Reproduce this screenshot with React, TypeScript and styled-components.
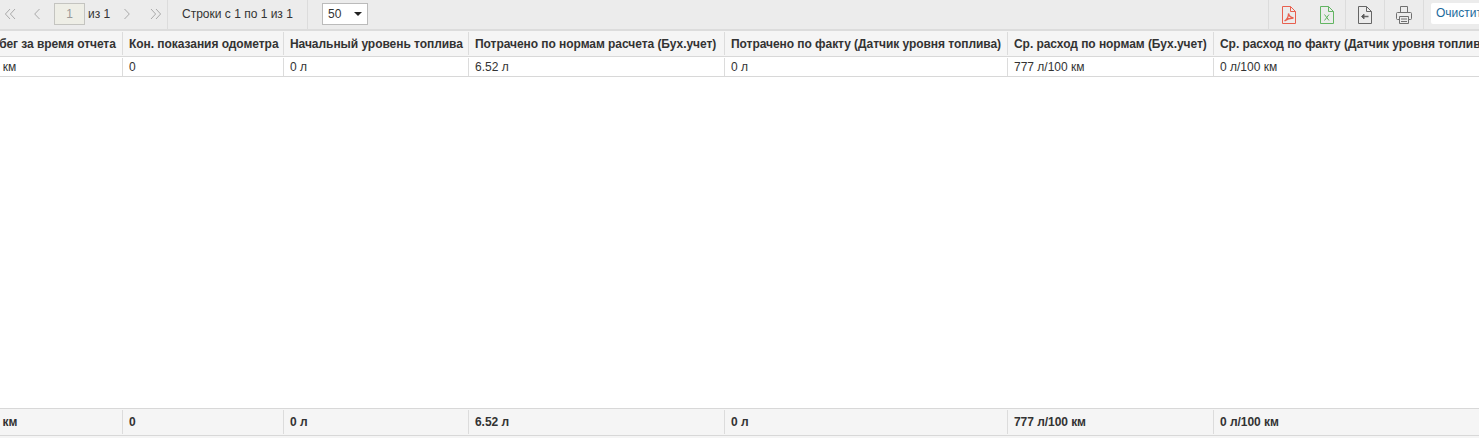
import styled, { createGlobalStyle } from "styled-components";

const GlobalStyle = createGlobalStyle`
  html, body {
    margin: 0;
    height: 100%;
    background: #fff;
    overflow: hidden;
  }
  body {
    font-family: "Liberation Sans", Arial, sans-serif;
    font-size: 12px;
    color: #333;
  }
`;

const Page = styled.div`
  width: 1479px;
  height: 438px;
  display: flex;
  flex-direction: column;
  overflow: hidden;
`;

const Toolbar = styled.div`
  flex: 0 0 31px;
  box-sizing: border-box;
  height: 31px;
  display: flex;
  align-items: stretch;
  background: #ececec;
  border-bottom: 2px solid #dcdcdc;
`;

const Pager = styled.div`
  display: flex;
  align-items: center;
  width: 168px;
  box-sizing: border-box;
  border-right: 1px solid #dcdcdc;
  padding: 0 0 1px 4px;
`;

const Arrow = styled.svg<{ $gap: number }>`
  width: 12px;
  height: 12px;
  margin-right: ${(p) => p.$gap}px;
  fill: none;
  stroke: #aaa;
  stroke-width: 1;
  flex: none;
`;

const PageInput = styled.div`
  width: 31px;
  height: 22px;
  box-sizing: border-box;
  border: 1px solid #c4c4c0;
  background: #eeeee6;
  color: #999;
  text-align: center;
  line-height: 20px;
  margin-right: 3px;
`;

const PageOf = styled.span`
  margin-right: 11px;
  white-space: nowrap;
`;

const RowsInfo = styled.div`
  width: 140px;
  box-sizing: border-box;
  border-right: 1px solid #dcdcdc;
  padding-left: 14px;
  line-height: 28px;
  white-space: nowrap;
`;

const PageSize = styled.div`
  margin: 3px 0 0 14px;
  width: 46px;
  height: 22px;
  box-sizing: border-box;
  border: 1px solid #bbb;
  background: #fff;
  display: flex;
  align-items: center;
  justify-content: space-between;
  padding: 0 5px;

  &::after {
    content: "";
    border-left: 4px solid transparent;
    border-right: 4px solid transparent;
    border-top: 4px solid #222;
  }
`;

const Spacer = styled.div`
  flex: 1;
`;

const ToolButton = styled.div<{ $width: number; $plain?: boolean }>`
  width: ${(p) => p.$width}px;
  box-sizing: border-box;
  border-left: ${(p) => (p.$plain ? "none" : "1px solid #dcdcdc")};
  display: flex;
  align-items: center;
  justify-content: center;

  svg {
    width: 18px;
    height: 18px;
    fill: none;
    stroke-width: 1;
  }
`;

const ClearButton = styled.div`
  width: 56px;
  box-sizing: border-box;
  border-left: 1px solid #dcdcdc;
  padding: 3px 0 0 7px;
`;

const ClearLabel = styled.div`
  height: 21px;
  line-height: 21px;
  background: #fff;
  border-radius: 2px 0 0 2px;
  color: #1c6a9c;
  padding-left: 5px;
  white-space: nowrap;
  overflow: hidden;
`;

const TableViewport = styled.div`
  flex: 1;
  display: flex;
  flex-direction: column;
  overflow: hidden;
`;

const Row = styled.div<{ $kind: "head" | "body" | "foot" }>`
  flex: none;
  display: grid;
  grid-template-columns: 151px 161px 185px 256px 283px 206px 300px;
  margin-left: -28px;
  width: 1542px;
  box-sizing: border-box;
  height: ${(p) => (p.$kind === "body" ? 20 : p.$kind === "head" ? 26 : 28)}px;
  padding: ${(p) => (p.$kind === "body" ? "1px 0 0" : "1px 0")};
  background: ${(p) => (p.$kind === "body" ? "#fff" : "#f5f5f5")};
  border-bottom: 1px solid #d8d8d8;
  ${(p) => p.$kind === "foot" && "border-top: 1px solid #d8d8d8;"}
  font-weight: ${(p) => (p.$kind === "body" ? "normal" : "bold")};
  letter-spacing: ${(p) => (p.$kind === "body" ? "0" : "-0.05px")};
  line-height: ${(p) => (p.$kind === "body" ? 18 : 24)}px;
`;

const Cell = styled.div`
  padding-left: 6px;
  border-right: 1px solid #dcdcdc;
  white-space: nowrap;
  overflow: hidden;

  &:first-child {
    padding-left: 4px;
  }

  &:last-child {
    border-right: none;
  }
`;

const EmptyArea = styled.div`
  flex: 1;
  background: #fff;
`;

const BottomStrip = styled.div`
  flex: 0 0 2px;
  background: #f5f5f5;
`;

const headers = [
  "Пробег за время отчета",
  "Кон. показания одометра",
  "Начальный уровень топлива",
  "Потрачено по нормам расчета (Бух.учет)",
  "Потрачено по факту (Датчик уровня топлива)",
  "Ср. расход по нормам (Бух.учет)",
  "Ср. расход по факту (Датчик уровня топлива)",
];

const values = ["0.84 км", "0", "0 л", "6.52 л", "0 л", "777 л/100 км", "0 л/100 км"];

const docOutline = "M2.500 .5h8l5 5v12h-13zM10.500 .5v5h5";

const App = () => {
  return (
    <Page>
      <GlobalStyle />
      <Toolbar>
        <Pager>
          <Arrow $gap={15} viewBox="0 0 12 12">
            <path d="M6 1 1.400 6 6 11M11 1 6.400 6 11 11" />
          </Arrow>
          <Arrow $gap={11} viewBox="0 0 12 12">
            <path d="M8.500 1 3.700 6l4.800 5" />
          </Arrow>
          <PageInput>1</PageInput>
          <PageOf>из 1</PageOf>
          <Arrow $gap={17} viewBox="0 0 12 12">
            <path d="M3.500 1 8.300 6l-4.800 5" />
          </Arrow>
          <Arrow $gap={0} viewBox="0 0 12 12">
            <path d="M1 1 5.600 6 1 11M6 1 10.600 6 6 11" />
          </Arrow>
        </Pager>
        <RowsInfo>Строки с 1 по 1 из 1</RowsInfo>
        <PageSize>50</PageSize>
        <Spacer />
        <ToolButton $width={40}>
          <svg viewBox="0 0 18 18" stroke="#e8604f">
            <path d={docOutline} />
            <path d="M4.500 15c2.500-1.500 4-4.500 4-7.500.5 2.500 2 4 5 4.500-3.500 0-6.500 1-9 3z" strokeWidth="1.300" />
          </svg>
        </ToolButton>
        <ToolButton $width={37} $plain>
          <svg viewBox="0 0 18 18" stroke="#62b562">
            <path d={docOutline} />
            <path d="M6.500 8.500l4.500 6M11 8.500l-4.500 6" />
          </svg>
        </ToolButton>
        <ToolButton $width={39}>
          <svg viewBox="0 0 18 18" stroke="#666">
            <path d={docOutline} />
            <path d="M12.500 10.500H7.500" strokeWidth="1.500" />
            <path d="M8 8 5.500 10.500 8 13z" fill="#555" />
          </svg>
        </ToolButton>
        <ToolButton $width={39}>
          <svg viewBox="-1 0 18 18" stroke="#707070">
            <path d="M4.500 6.500V.5h7v6M3.500 13.500h-2a1 1 0 0 1-1-1v-5a1 1 0 0 1 1-1h13a1 1 0 0 1 1 1v5a1 1 0 0 1-1 1h-2" />
            <path d="M3.500 10.500h9v7h-9zM5 13h6M5 15.500h6" />
          </svg>
        </ToolButton>
        <ClearButton>
          <ClearLabel>Очистить</ClearLabel>
        </ClearButton>
      </Toolbar>
      <TableViewport>
        <Row $kind="head">
          {headers.map((h) => (
            <Cell key={h}>{h}</Cell>
          ))}
        </Row>
        <Row $kind="body">
          {values.map((v, i) => (
            <Cell key={i}>{v}</Cell>
          ))}
        </Row>
        <EmptyArea />
        <Row $kind="foot">
          {values.map((v, i) => (
            <Cell key={i}>{v}</Cell>
          ))}
        </Row>
        <BottomStrip />
      </TableViewport>
    </Page>
  );
};

export default App;
